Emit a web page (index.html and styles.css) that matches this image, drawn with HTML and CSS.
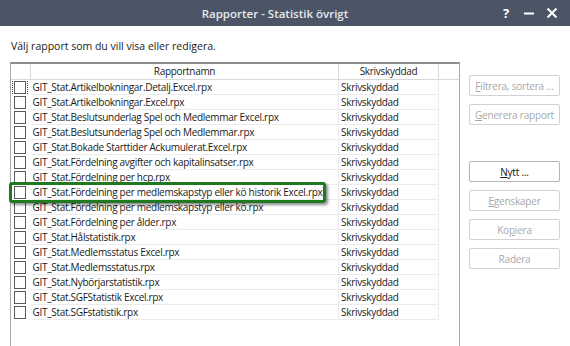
FILE: index.html
```html
<!DOCTYPE html>
<html lang="sv">
<head>
    <meta charset="UTF-8">
    <title>Rapporter - Statistik övrigt</title>
    <link rel="stylesheet" href="styles.css">
</head>
<body>
<div class="window">
    <div class="titlebar">
        <span class="title">Rapporter - Statistik övrigt</span>
        <div class="controls">
            <span class="help">?</span>
            <svg class="ctl" width="12" height="12" viewBox="0 0 12 12"><path d="M1 6.5h10" stroke="#fff" stroke-width="2"/></svg>
            <svg class="ctl" width="12" height="12" viewBox="0 0 12 12"><path d="M1.5 1.5l9 9M10.5 1.5l-9 9" stroke="#fff" stroke-width="2"/></svg>
        </div>
    </div>

    <div class="content">
        <p class="prompt">Välj rapport som du vill visa eller redigera.</p>

        <div class="main">
            <div class="list">
                <table class="reports">
                    <thead>
                        <tr>
                            <th class="col-check"></th>
                            <th class="col-name">Rapportnamn</th>
                            <th class="col-ro">Skrivskyddad</th>
                            <th class="col-fill"></th>
                        </tr>
                    </thead>
                    <tbody>
                        <tr><td class="col-check"><span class="box focus"></span></td><td class="col-name">GIT_Stat.Artikelbokningar.Detalj.Excel.rpx</td><td class="col-ro">Skrivskyddad</td><td class="col-fill"></td></tr>
                        <tr><td class="col-check"><span class="box"></span></td><td class="col-name">GIT_Stat.Artikelbokningar.Excel.rpx</td><td class="col-ro">Skrivskyddad</td><td class="col-fill"></td></tr>
                        <tr><td class="col-check"><span class="box"></span></td><td class="col-name">GIT_Stat.Beslutsunderlag Spel och Medlemmar Excel.rpx</td><td class="col-ro">Skrivskyddad</td><td class="col-fill"></td></tr>
                        <tr><td class="col-check"><span class="box"></span></td><td class="col-name">GIT_Stat.Beslutsunderlag Spel och Medlemmar.rpx</td><td class="col-ro">Skrivskyddad</td><td class="col-fill"></td></tr>
                        <tr><td class="col-check"><span class="box"></span></td><td class="col-name">GIT_Stat.Bokade Starttider Ackumulerat.Excel.rpx</td><td class="col-ro">Skrivskyddad</td><td class="col-fill"></td></tr>
                        <tr><td class="col-check"><span class="box"></span></td><td class="col-name">GIT_Stat.Fördelning avgifter och kapitalinsatser.rpx</td><td class="col-ro">Skrivskyddad</td><td class="col-fill"></td></tr>
                        <tr><td class="col-check"><span class="box"></span></td><td class="col-name">GIT_Stat.Fördelning per hcp.rpx</td><td class="col-ro">Skrivskyddad</td><td class="col-fill"></td></tr>
                        <tr><td class="col-check"><span class="box"></span></td><td class="col-name">GIT_Stat.Fördelning per medlemskapstyp eller kö historik Excel.rpx</td><td class="col-ro">Skrivskyddad</td><td class="col-fill"></td></tr>
                        <tr><td class="col-check"><span class="box"></span></td><td class="col-name">GIT_Stat.Fördelning per medlemskapstyp eller kö.rpx</td><td class="col-ro">Skrivskyddad</td><td class="col-fill"></td></tr>
                        <tr><td class="col-check"><span class="box"></span></td><td class="col-name">GIT_Stat.Fördelning per ålder.rpx</td><td class="col-ro">Skrivskyddad</td><td class="col-fill"></td></tr>
                        <tr><td class="col-check"><span class="box"></span></td><td class="col-name">GIT_Stat.Hålstatistik.rpx</td><td class="col-ro">Skrivskyddad</td><td class="col-fill"></td></tr>
                        <tr><td class="col-check"><span class="box"></span></td><td class="col-name">GIT_Stat.Medlemsstatus Excel.rpx</td><td class="col-ro">Skrivskyddad</td><td class="col-fill"></td></tr>
                        <tr><td class="col-check"><span class="box"></span></td><td class="col-name">GIT_Stat.Medlemsstatus.rpx</td><td class="col-ro">Skrivskyddad</td><td class="col-fill"></td></tr>
                        <tr><td class="col-check"><span class="box"></span></td><td class="col-name">GIT_Stat.Nybörjarstatistik.rpx</td><td class="col-ro">Skrivskyddad</td><td class="col-fill"></td></tr>
                        <tr><td class="col-check"><span class="box"></span></td><td class="col-name">GIT_Stat.SGFStatistik Excel.rpx</td><td class="col-ro">Skrivskyddad</td><td class="col-fill"></td></tr>
                        <tr><td class="col-check"><span class="box"></span></td><td class="col-name">GIT_Stat.SGFstatistik.rpx</td><td class="col-ro">Skrivskyddad</td><td class="col-fill"></td></tr>
                    </tbody>
                </table>
                <div class="callout"></div>
            </div>

            <div class="buttons">
                <button class="btn" disabled><u>F</u>iltrera, sortera ...</button>
                <button class="btn" disabled><u>G</u>enerera rapport</button>
                <button class="btn btn-new"><u>N</u>ytt ...</button>
                <button class="btn" disabled><u>E</u>genskaper</button>
                <button class="btn" disabled>Ko<u>p</u>iera</button>
                <button class="btn" disabled>Radera</button>
            </div>
        </div>
    </div>
</div>
</body>
</html>
```

FILE: styles.css
```css
body {
    margin: 0;
    width: 570px;
    height: 346px;
    overflow: hidden;
    background-color: #fff;
    font-family: "Open Sans", sans-serif;
    font-size: 10px;
    color: #1a1a1a;
}
.titlebar {
    height: 26px;
    background-color: #4b5566;
    display: flex;
    align-items: center;
}
.title {
    flex: 1;
    text-align: center;
    padding-left: 50px;
    color: #e6e9ee;
    font-size: 11.5px;
    font-weight: 600;
}
.controls {
    display: flex;
    align-items: center;
    gap: 11px;
    padding-right: 12px;
}
.help {
    color: #fff;
    font-weight: 700;
    font-size: 13px;
    width: 12px;
    text-align: center;
}
.content {
    padding: 0 0 0 10px;
}
.prompt {
    margin: 13px 0 9px 1px;
    font-size: 10.5px;
    line-height: 14px;
}
.main {
    display: flex;
    gap: 9px;
}
.list {
    position: relative;
    width: 448px;
    height: 284px;
    border: 1px solid #a9a9a9;
    border-top: 2px solid #8c8c8c;
    border-bottom: none;
}
.reports {
    border-collapse: collapse;
    table-layout: fixed;
    width: 448px;
    letter-spacing: -0.3px;
}
.reports th {
    height: 15px;
    font-weight: normal;
    text-align: center;
    border-right: 1px solid #d9d9d9;
    border-bottom: 1px solid #d9d9d9;
    padding: 0;
    line-height: 15px;
}
.reports th.col-fill {
    border-right: none;
}
.reports td {
    height: 14px;
    padding: 0 0 0 2px;
    line-height: 14px;
    white-space: nowrap;
    overflow: hidden;
}
.reports td.col-name,
.reports td.col-ro {
    border-bottom: 1px solid #ececec;
    border-right: 1px solid #ececec;
}
.col-check { width: 19px; }
.col-name { width: 307px; }
.col-ro { width: 99px; }
.reports td.col-check {
    padding: 0 0 0 3px;
}
.box {
    display: block;
    width: 10px;
    height: 11px;
    border: 1px solid #5a5a5a;
    background: #fff;
}
.box.focus {
    outline: 1px dotted #444;
    outline-offset: 1px;
}
.callout {
    position: absolute;
    left: -2px;
    top: 118px;
    width: 311px;
    height: 15px;
    border: 3px solid #1f7a1f;
    border-radius: 3px;
    box-shadow: 2px 2px 3px rgba(0, 0, 0, 0.45);
}
.buttons {
    display: flex;
    flex-direction: column;
    gap: 8px;
    padding-top: 13px;
}
.btn {
    width: 91px;
    height: 21px;
    padding: 0;
    font-family: "Open Sans", sans-serif;
    font-size: 10px;
    letter-spacing: -0.2px;
    color: #a8a8a8;
    background-color: #fff;
    border: 1px solid #d2d2d2;
    border-radius: 2px;
}
.btn u {
    text-decoration-thickness: 1px;
}
.btn-new {
    margin-top: 28px;
    color: #111;
    border-color: #b4b4b4;
}
```
